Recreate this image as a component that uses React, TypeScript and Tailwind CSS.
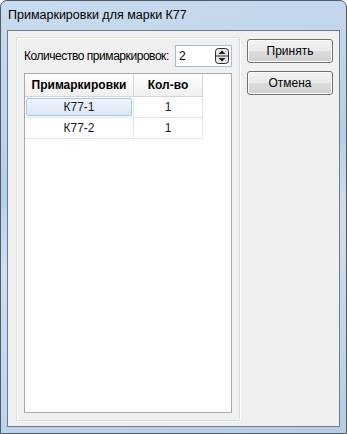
const font = { fontFamily: '"Liberation Sans", Arial, sans-serif' };

function WinButton({ children }: { children: string }) {
  return (
    <button className="h-[24px] w-[86px] rounded-[3px] border border-[#707070] bg-[linear-gradient(#f2f2f2_0%,#ebebeb_50%,#dddddd_51%,#cfcfcf_100%)] text-[12px] text-black shadow-[inset_0_0_0_1px_#fcfcfc]">
      {children}
    </button>
  );
}

function SpinArrows() {
  return (
    <svg width="14" height="16" viewBox="0 0 14 16">
      <rect x="0.5" y="0.5" width="13" height="15" rx="3" fill="#e6e6e6" stroke="#2b2b2b" />
      <line x1="1" y1="8" x2="13" y2="8" stroke="#2b2b2b" />
      <path d="M3.5 6 L7 2.5 L10.5 6 Z" fill="#1a1a1a" />
      <path d="M3.5 10 L7 13.5 L10.5 10 Z" fill="#1a1a1a" />
    </svg>
  );
}

function SpinBox() {
  return (
    <div className="flex h-[22px] w-[57px] shrink-0 items-center justify-between border border-[#9dbde0] bg-white pl-[3px] pr-[2px]">
      <span className="text-[12px] leading-none">2</span>
      <SpinArrows />
    </div>
  );
}

const rows = [
  { name: "К77-1", qty: "1" },
  { name: "К77-2", qty: "1" },
];

export default function App() {
  return (
    <div className="h-[434px] w-[347px] overflow-hidden bg-white" style={font}>
      <div className="flex h-full w-full flex-col rounded-t-[7px] border border-[#4d5b6b] bg-[linear-gradient(170deg,#c9dbee_0%,#b9cfe7_40%,#cfdff0_55%,#b7cde6_100%)]">
        <div className="flex h-[29px] items-center pl-[7px] text-[12.5px] text-black">
          Примаркировки для марки К77
        </div>
        <div className="mx-[6px] mb-[6px] flex flex-1 gap-[7px] border border-[#6d7b8b] bg-[#f0f0f0] pl-[8px] pr-[6px] pt-[6px] pb-[5px]">
          <div className="flex w-[225px] flex-col rounded-[2px] border border-[#d5dfe5] px-[7px] pb-[7px] pt-[7px] shadow-[inset_1px_1px_0_#ffffff,1px_1px_0_#ffffff]">
            <div className="flex items-center justify-between">
              <span className="whitespace-nowrap text-[12px] tracking-[-0.45px] text-black">Количество примаркировок:</span>
              <SpinBox />
            </div>
            <div className="mt-[6px] flex-1 border border-[#a9a9a9] bg-white">
              <div className="flex">
                <div className="flex h-[23px] w-[109px] items-center justify-center border-b border-r border-[#d5d5d5] bg-[linear-gradient(#ffffff,#f0f0f0)] text-[12px] font-bold">
                  Примаркировки
                </div>
                <div className="flex h-[23px] w-[69px] items-center justify-center border-b border-r border-[#d5d5d5] bg-[linear-gradient(#ffffff,#f0f0f0)] text-[12px] font-bold">
                  Кол-во
                </div>
              </div>
              {rows.map((r, i) => (
                <div key={r.name} className="flex">
                  <div className="flex h-[21px] w-[109px] items-center justify-center border-b border-r border-[#e6e6e6] p-[1px]">
                    <div
                      className={
                        i === 0
                          ? "flex h-full w-full items-center justify-center rounded-[2px] border border-[#a6c8ee] bg-[linear-gradient(#eef5fd,#dbe8f7)] text-[12px] text-[#1a1a1a]"
                          : "flex h-full w-full items-center justify-center text-[12px] text-[#1a1a1a]"
                      }
                    >
                      {r.name}
                    </div>
                  </div>
                  <div className="flex h-[21px] w-[69px] items-center justify-center border-b border-r border-[#e6e6e6] text-[12px] text-[#1a1a1a]">
                    {r.qty}
                  </div>
                </div>
              ))}
            </div>
          </div>
          <div className="flex flex-col gap-[8px] pt-[2px]">
            <WinButton>Принять</WinButton>
            <WinButton>Отмена</WinButton>
          </div>
        </div>
      </div>
    </div>
  );
}
